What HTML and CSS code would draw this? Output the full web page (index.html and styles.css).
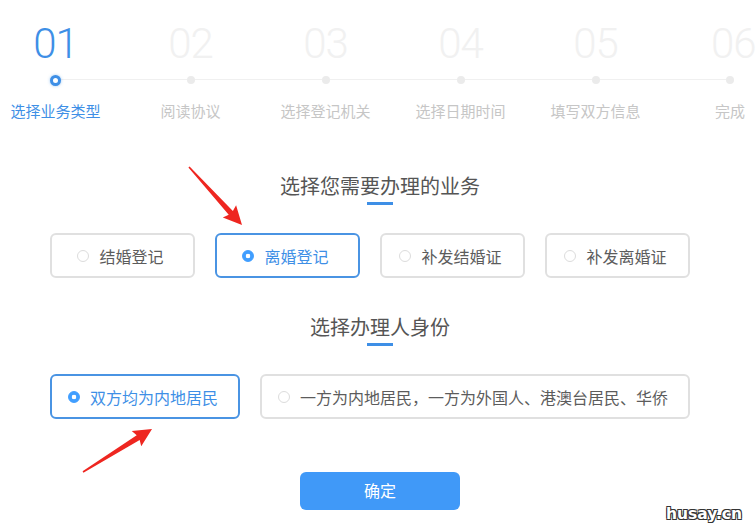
FILE: index.html
```html
<!DOCTYPE html>
<html lang="zh">
<head>
<meta charset="UTF-8">
<title>选择业务类型</title>
<link rel="stylesheet" href="styles.css">
</head>
<body>
    <!-- 步骤条 -->
    <div class="steps-wrap">
        <div class="steps">
            <div class="step active">
                <div class="step-num">01</div>
                <div class="step-dot-row"><span class="step-dot"></span></div>
                <div class="step-label">选择业务类型</div>
            </div>
            <div class="step">
                <div class="step-num">02</div>
                <div class="step-dot-row"><span class="step-dot"></span></div>
                <div class="step-label">阅读协议</div>
            </div>
            <div class="step">
                <div class="step-num">03</div>
                <div class="step-dot-row"><span class="step-dot"></span></div>
                <div class="step-label">选择登记机关</div>
            </div>
            <div class="step">
                <div class="step-num">04</div>
                <div class="step-dot-row"><span class="step-dot"></span></div>
                <div class="step-label">选择日期时间</div>
            </div>
            <div class="step">
                <div class="step-num">05</div>
                <div class="step-dot-row"><span class="step-dot"></span></div>
                <div class="step-label">填写双方信息</div>
            </div>
            <div class="step last">
                <div class="step-num">06</div>
                <div class="step-dot-row"><span class="step-dot"></span></div>
                <div class="step-label">完成</div>
            </div>
        </div>
    </div>

    <div class="main">
        <h2 class="section-title">选择您需要办理的业务</h2>
        <div class="title-bar"></div>
        <div class="options">
            <div class="option w-small"><span class="radio"></span>结婚登记</div>
            <div class="option w-small checked"><span class="radio"></span>离婚登记</div>
            <div class="option w-small"><span class="radio"></span>补发结婚证</div>
            <div class="option w-small"><span class="radio"></span>补发离婚证</div>
        </div>

        <h2 class="section-title second">选择办理人身份</h2>
        <div class="title-bar"></div>
        <div class="options">
            <div class="option w-mid checked"><span class="radio"></span>双方均为内地居民</div>
            <div class="option w-wide"><span class="radio"></span>一方为内地居民，一方为外国人、港澳台居民、华侨</div>
        </div>

        <div class="submit-row">
            <button class="btn-submit">确定</button>
        </div>
    </div>

    <!-- 标注箭头 -->
    <svg class="marks" width="756" height="531" viewBox="0 0 756 531">
        <polygon transform="translate(189 167) rotate(47.6)" points="0,-0.8 62,-2.8 60,-9 78.6,0 60,9 62,2.8 0,0.8" fill="#ee2620"/>
        <polygon transform="translate(83 472) rotate(-31.9)" points="0,-0.8 65,-2.8 63,-9 81.3,0 63,9 65,2.8 0,0.8" fill="#ee2620"/>
    </svg>

    <div class="watermark">husay.cn</div>
</body>
</html>
```

FILE: styles.css
```css
html, body {
    margin: 0;
    padding: 0;
    overflow: hidden;
}
body {
    width: 756px;
    height: 531px;
    position: relative;
    background: #fff;
    font-family: "Noto Sans CJK SC", sans-serif;
}
.steps-wrap {
    width: 756px;
    overflow: hidden;
    padding-top: 22px;
}
.steps {
    display: flex;
    margin-left: -12px;
}
.step {
    flex: 0 0 135px;
    text-align: center;
}
/* 最后一步在右侧被裁掉一半 */
.step.last {
    flex-basis: 93px;
    text-align: left;
}
.step-num {
    font-family: "Roboto", sans-serif;
    font-weight: 300;
    font-size: 42px;
    line-height: 44px;
    letter-spacing: -1px;
    color: #f1f1f1;
    white-space: nowrap;
}
.step.last .step-num {
    padding-left: 48px;
}
.step-dot-row {
    position: relative;
    height: 28px;
    display: flex;
    justify-content: center;
    align-items: center;
}
.step.last .step-dot-row {
    justify-content: flex-start;
    padding-left: 63px;
}
/* 步骤之间的连线 */
.step:not(.last) .step-dot-row::after {
    content: "";
    position: absolute;
    left: 50%;
    width: 100%;
    top: 13px;
    height: 1px;
    background: #f0f0f0;
}
.step-dot {
    position: relative;
    z-index: 1;
    width: 8px;
    height: 8px;
    border-radius: 50%;
    background: #ebebeb;
}
.step-label {
    margin-top: 7px;
    font-size: 15px;
    line-height: 20px;
    color: #c6c6c6;
    white-space: nowrap;
}
.step.last .step-label {
    padding-left: 52px;
}
.step.active .step-num {
    color: #3e8fe6;
}
.step.active .step-dot {
    width: 11px;
    height: 11px;
    box-sizing: border-box;
    border: 3px solid #3e8fe6;
    background: #fff;
    box-shadow: 0 0 3px rgba(62, 143, 230, 0.5);
}
.step.active .step-label {
    color: #3e8fe6;
}
.main {
    width: 660px;
    margin-left: 50px;
}
.section-title {
    margin: 51px 0 0;
    font-size: 20px;
    font-weight: normal;
    line-height: 28px;
    text-align: center;
    color: #555;
}
.section-title.second {
    margin-top: 35px;
}
.title-bar {
    width: 26px;
    height: 3px;
    margin: 2px auto 0;
    background: #3e8fe6;
}
.options {
    display: flex;
    gap: 20px;
    margin-top: 28px;
}
.option {
    box-sizing: border-box;
    height: 45px;
    border: 2px solid #e0e0e0;
    border-radius: 6px;
    display: flex;
    align-items: center;
    justify-content: center;
    gap: 10px;
    padding-right: 4px;
    font-size: 16px;
    color: #5c5c5c;
}
.w-small { width: 145px; }
.w-mid { width: 190px; }
.w-wide { width: 430px; }
.radio {
    box-sizing: border-box;
    width: 12px;
    height: 12px;
    border: 1px solid #dcdcdc;
    border-radius: 50%;
}
.option.checked {
    border-color: #4a94e3;
    color: #3e8fe6;
}
.option.checked .radio {
    border-color: #409eff;
    background: radial-gradient(circle, #fff 2px, #409eff 2.6px);
}
.submit-row {
    display: flex;
    justify-content: center;
    margin-top: 53px;
}
.btn-submit {
    width: 160px;
    height: 38px;
    border: none;
    border-radius: 6px;
    background: #4099f8;
    color: #fff;
    font-family: "Noto Sans CJK SC", sans-serif;
    font-size: 16px;
    line-height: 36px;
    padding: 0 0 2px;
}
.marks {
    position: absolute;
    left: 0;
    top: 0;
    pointer-events: none;
}
.watermark {
    position: absolute;
    right: 14px;
    bottom: 8px;
    font-family: "DejaVu Sans", sans-serif;
    font-weight: bold;
    font-size: 15.5px;
    color: #fff;
    text-shadow: -1px -1px 0 #333, 1px -1px 0 #333, -1px 1px 0 #333, 1px 1px 0 #333;
}
```
